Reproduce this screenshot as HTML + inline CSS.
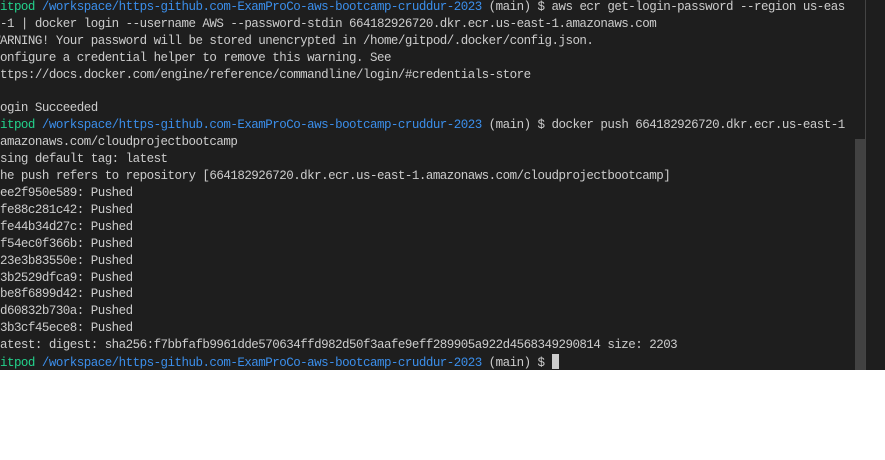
<!DOCTYPE html>
<html><head><style>
html,body{margin:0;padding:0;width:885px;height:460px;background:#fff;overflow:hidden}
#t{position:absolute;left:0;top:0;width:885px;height:370px;background:#1e1e1e;overflow:hidden}
#txt{position:absolute;left:-7px;top:-1px;width:870px;font-family:"Liberation Mono",monospace;font-size:12.5px;letter-spacing:-0.52px;line-height:16.9px;color:#cccccc;white-space:pre}
.g{color:#23d18b}.b{color:#3b8eea}
#div{position:absolute;left:865px;top:0;width:1px;height:370px;background:#444}
#sb{position:absolute;left:855px;top:139px;width:10px;height:231px;background:#424242}
#cur{display:inline-block;width:7px;height:15px;background:#cccccc;vertical-align:-3px}
</style></head><body>
<div id="t">
<div id="txt"><span class="g">gitpod</span> <span class="b">/workspace/https-github.com-ExamProCo-aws-bootcamp-cruddur-2023</span> (main) $ aws ecr get-login-password --region us-eas
t-1 | docker login --username AWS --password-stdin 664182926720.dkr.ecr.us-east-1.amazonaws.com
WARNING! Your password will be stored unencrypted in /home/gitpod/.docker/config.json.
Configure a credential helper to remove this warning. See
https://docs.docker.com/engine/reference/commandline/login/#credentials-store

Login Succeeded
<span class="g">gitpod</span> <span class="b">/workspace/https-github.com-ExamProCo-aws-bootcamp-cruddur-2023</span> (main) $ docker push 664182926720.dkr.ecr.us-east-1
.amazonaws.com/cloudprojectbootcamp
Using default tag: latest
The push refers to repository [664182926720.dkr.ecr.us-east-1.amazonaws.com/cloudprojectbootcamp]
9ee2f950e589: Pushed
6fe88c281c42: Pushed
6fe44b34d27c: Pushed
5f54ec0f366b: Pushed
123e3b83550e: Pushed
73b2529dfca9: Pushed
9be8f6899d42: Pushed
3d60832b730a: Pushed
23b3cf45ece8: Pushed
latest: digest: sha256:f7bbfafb9961dde570634ffd982d50f3aafe9eff289905a922d4568349290814 size: 2203
<span class="g">gitpod</span> <span class="b">/workspace/https-github.com-ExamProCo-aws-bootcamp-cruddur-2023</span> (main) $ <span id="cur"></span></div>
<div id="sb"></div>
<div id="div"></div>
</div>
</body></html>
